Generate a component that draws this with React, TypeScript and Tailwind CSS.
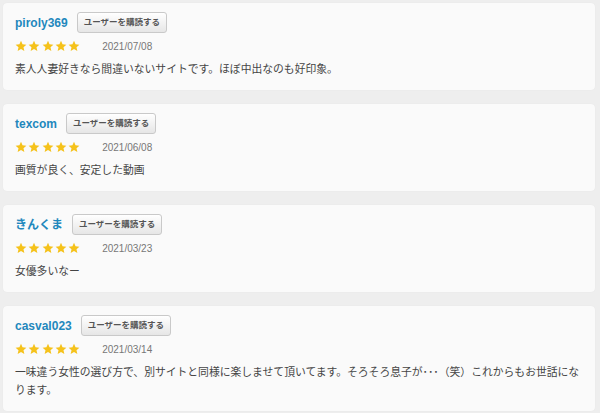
const reviews = [
  {
    user: "piroly369",
    date: "2021/07/08",
    text: "素人人妻好きなら間違いないサイトです。ほぼ中出なのも好印象。",
  },
  { user: "texcom", date: "2021/06/08", text: "画質が良く、安定した動画" },
  { user: "きんくま", date: "2021/03/23", text: "女優多いなー" },
  {
    user: "casval023",
    date: "2021/03/14",
    text: "一味違う女性の選び方で、別サイトと同様に楽しませて頂いてます。そろそろ息子が･･･（笑）これからもお世話になります。",
  },
];

function Star() {
  return (
    <svg width="12" height="12" viewBox="0 0 24 24" className="shrink-0">
      <polygon
        points="12,1.5 15.1,8.6 22.8,9.3 17,14.4 18.7,22 12,18 5.3,22 7,14.4 1.2,9.3 8.9,8.6"
        fill="#f5c21b"
      />
    </svg>
  );
}

export default function App() {
  return (
    <main
      className="min-h-screen w-[600px] bg-[#eeeeee] pl-[3px] pr-[5px] pt-[3px] pb-[4px] flex flex-col gap-[14px]"
      style={{ fontFamily: '"Liberation Sans", "Noto Sans CJK JP", sans-serif' }}
    >
      {reviews.map((r) => (
        <div
          key={r.user}
          className="rounded-[4px] bg-[#fafafa] px-[12px] pt-[9px] pb-[12px] shadow-[0_0_1px_rgba(0,0,0,0.08)]"
        >
          <div className="flex h-[21px] items-center gap-[9px]">
            <span className="text-[12px] font-bold text-[#1f88bd]">{r.user}</span>
            <button className="h-[21px] rounded-[3px] border border-[#c9c9c9] bg-gradient-to-b from-[#ffffff] to-[#e6e6e6] px-[6px] text-[8.5px] font-bold leading-none text-[#555]">
              ユーザーを購読する
            </button>
          </div>
          <div className="mt-[6px] flex h-[14px] items-center">
            <div className="flex gap-[1.3px]">
              <Star />
              <Star />
              <Star />
              <Star />
              <Star />
            </div>
            <span className="ml-[22px] text-[10px] text-[#777]">{r.date}</span>
          </div>
          <p className="mt-[7px] w-[572px] text-[10.8px] leading-[18px] text-[#444]">
            {r.text}
          </p>
        </div>
      ))}
    </main>
  );
}
